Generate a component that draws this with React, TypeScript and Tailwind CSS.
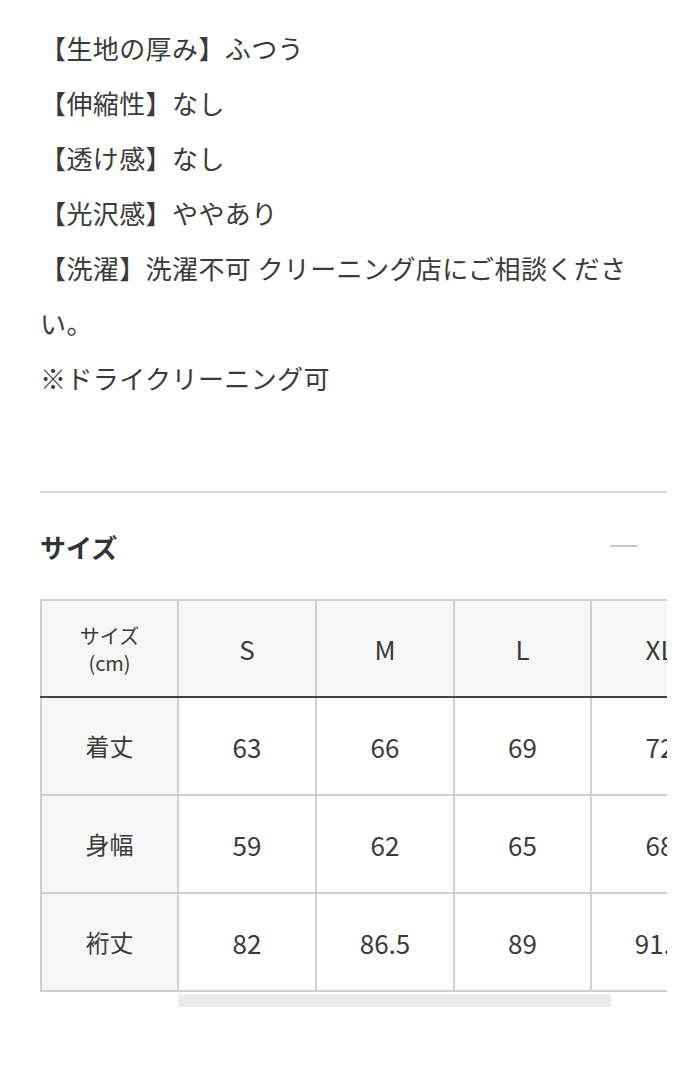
import React from 'react';

const specs = [
  '【生地の厚み】ふつう',
  '【伸縮性】なし',
  '【透け感】なし',
  '【光沢感】ややあり',
  '【洗濯】洗濯不可 クリーニング店にご相談ください。',
  '※ドライクリーニング可',
];

const sizes = ['S', 'M', 'L', 'XL', 'XXL'];

const rows = [
  { label: '着丈', values: ['63', '66', '69', '72', '75'] },
  { label: '身幅', values: ['59', '62', '65', '68', '71'] },
  { label: '裄丈', values: ['82', '86.5', '89', '91.5', '94'] },
];

const font = { fontFamily: '"Noto Sans CJK JP", "Noto Sans", sans-serif' };

const App = () => {
  return (
    <div className="bg-white min-h-[1080px] pl-[40px] pr-[21px] text-[#3a3a3a]" style={font}>
      <div className="pt-[20px] text-[26px] leading-[55px] tracking-[0.4px]">
        {specs.map((line) => (
          <p key={line}>{line}</p>
        ))}
      </div>

      <div className="mt-[86px] border-t-2 border-[#d4d4d4]">
        <div className="flex items-center justify-between h-[106px]">
          <h2 className="text-[26px] font-bold text-[#333]">サイズ</h2>
          <span className="block w-[27px] h-[2px] bg-[#c8c8c8] mr-[30px]" />
        </div>

        <div className="overflow-hidden">
          <table className="border-collapse table-fixed w-[825px] text-center">
            <thead>
              <tr className="h-[97px] bg-[#f6f6f6]">
                <th className="w-[137px] border-2 border-[#d0d0d0] border-b-[#444] font-normal text-[20px] leading-[27px]">
                  サイズ
                  <br />
                  (cm)
                </th>
                {sizes.map((s, i) => (
                  <th
                    key={s}
                    className={
                      i === 2
                        ? 'w-[137px] border-2 border-[#d0d0d0] border-b-[#444] font-normal text-[26px]'
                        : 'w-[138px] border-2 border-[#d0d0d0] border-b-[#444] font-normal text-[26px]'
                    }
                  >
                    {s}
                  </th>
                ))}
              </tr>
            </thead>
            <tbody>
              {rows.map((row) => (
                <tr key={row.label} className="h-[98px]">
                  <td className="border-2 border-[#d0d0d0] bg-[#f6f6f6] text-[24px]">{row.label}</td>
                  {row.values.map((v, i) => (
                    <td key={i} className="border-2 border-[#d0d0d0] bg-white text-[26px]">
                      {v}
                    </td>
                  ))}
                </tr>
              ))}
            </tbody>
          </table>
        </div>

        <div className="ml-[138px] mt-[2px] w-[433px] h-[13px] bg-[#ececec]" />
      </div>
    </div>
  );
};

export default App;
